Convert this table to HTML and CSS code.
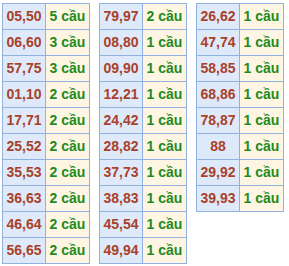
FILE: index.html
```html
<!DOCTYPE html>
<html lang="vi">
<head>
<meta charset="utf-8">
<link rel="stylesheet" href="styles.css">
</head>
<body>
<div class="wrap">
  <div class="tbl">
    <div class="num">05,50</div><div class="cnt">5 cầu</div>
    <div class="num">06,60</div><div class="cnt">3 cầu</div>
    <div class="num">57,75</div><div class="cnt">3 cầu</div>
    <div class="num">01,10</div><div class="cnt">2 cầu</div>
    <div class="num">17,71</div><div class="cnt">2 cầu</div>
    <div class="num">25,52</div><div class="cnt">2 cầu</div>
    <div class="num">35,53</div><div class="cnt">2 cầu</div>
    <div class="num">36,63</div><div class="cnt">2 cầu</div>
    <div class="num">46,64</div><div class="cnt">2 cầu</div>
    <div class="num">56,65</div><div class="cnt">2 cầu</div>
  </div>
  <div class="tbl">
    <div class="num">79,97</div><div class="cnt">2 cầu</div>
    <div class="num">08,80</div><div class="cnt">1 cầu</div>
    <div class="num">09,90</div><div class="cnt">1 cầu</div>
    <div class="num">12,21</div><div class="cnt">1 cầu</div>
    <div class="num">24,42</div><div class="cnt">1 cầu</div>
    <div class="num">28,82</div><div class="cnt">1 cầu</div>
    <div class="num">37,73</div><div class="cnt">1 cầu</div>
    <div class="num">38,83</div><div class="cnt">1 cầu</div>
    <div class="num">45,54</div><div class="cnt">1 cầu</div>
    <div class="num">49,94</div><div class="cnt">1 cầu</div>
  </div>
  <div class="tbl">
    <div class="num">26,62</div><div class="cnt">1 cầu</div>
    <div class="num">47,74</div><div class="cnt">1 cầu</div>
    <div class="num">58,85</div><div class="cnt">1 cầu</div>
    <div class="num">68,86</div><div class="cnt">1 cầu</div>
    <div class="num">78,87</div><div class="cnt">1 cầu</div>
    <div class="num">88</div><div class="cnt">1 cầu</div>
    <div class="num">29,92</div><div class="cnt">1 cầu</div>
    <div class="num">39,93</div><div class="cnt">1 cầu</div>
  </div>
</div>
</body>
</html>
```

FILE: styles.css
```css
html, body {
  margin: 0;
  padding: 0;
  background: #ffffff;
  overflow: hidden;
}
.wrap {
  display: flex;
  align-items: flex-start;
  gap: 9px;
  padding: 3px 0 0 2px;
  font-family: "Liberation Sans", Arial, sans-serif;
  font-weight: bold;
  font-size: 14px;
}
.tbl {
  flex-shrink: 0;
  display: grid;
  grid-template-columns: 43px 44px;
  border-top: 1px solid #91b1e1;
  border-left: 1px solid #91b1e1;
}
.num, .cnt {
  height: 25px;
  line-height: 25px;
  text-align: center;
  border-right: 1px solid #91b1e1;
  border-bottom: 1px solid #91b1e1;
}
.num {
  background: #deeafa;
  color: #a9412a;
}
.cnt {
  background: #fef6e2;
  color: #1f8a1f;
}
```
